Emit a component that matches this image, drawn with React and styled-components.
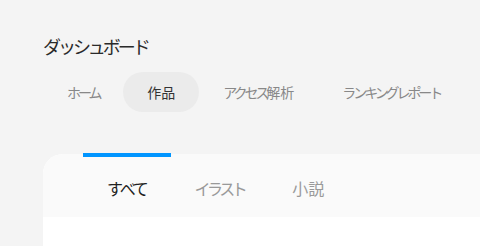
import React, { useState } from 'react'
import styled, { createGlobalStyle } from 'styled-components'

const GlobalStyle = createGlobalStyle`
    html, body {
        margin: 0;
        padding: 0;
        background: #f4f4f4;
        overflow: hidden;
    }
    body {
        font-family: "Noto Sans CJK JP", "Noto Sans", sans-serif;
    }
`

const navItems = ['ホーム', '作品', 'アクセス解析', 'ランキングレポート']
const tabItems = ['すべて', 'イラスト', '小説']

function Jp({ text }) {
    const parts = text.split(/([\u3040-\u309f]+|[\u30a0-\u30ff]+)/).filter(Boolean)
    return parts.map((part, i) => {
        if (/[\u3040-\u309f]/.test(part)) return <Kana key={i} $hira>{part}</Kana>
        if (/[\u30a0-\u30ff]/.test(part)) return <Kana key={i}>{part}</Kana>
        return <span key={i}>{part}</span>
    })
}

function App() {
    const [nav, setNav] = useState(1)
    const [tab, setTab] = useState(0)

    return (
        <>
            <GlobalStyle />
            <Page>
                <Title><Jp text="ダッシュボード" /></Title>
                <Nav>
                    {navItems.map((item, i) => (
                        <NavItem key={item} $active={i === nav} onClick={() => setNav(i)}>
                            <Jp text={item} />
                        </NavItem>
                    ))}
                </Nav>
                <Card>
                    <TabBar>
                        {tabItems.map((item, i) => (
                            <Tab key={item} $active={i === tab} onClick={() => setTab(i)}>
                                <Jp text={item} />
                            </Tab>
                        ))}
                    </TabBar>
                    <Content />
                </Card>
            </Page>
        </>
    )
}

const Kana = styled.span`
    letter-spacing: ${(p) => (p.$hira ? '-0.14em' : '-0.22em')};
`

const Page = styled.div`
    width: 560px;
    height: 246px;
    padding: 32px 0 0 43px;
    box-sizing: border-box;
`

const Title = styled.h1`
    margin: 0;
    font-size: 18px;
    line-height: 28px;
    font-weight: 400;
    color: #2a2a2a;

    ${Kana} { letter-spacing: -0.17em; }
`

const Nav = styled.nav`
    display: flex;
    margin: 12px 0 0 0;
`

const NavItem = styled.div`
    height: 40px;
    line-height: 40px;
    padding: 0 24px;
    border-radius: 20px;
    font-size: 14px;
    color: ${(p) => (p.$active ? '#333' : '#888')};
    background: ${(p) => (p.$active ? '#ebebeb' : 'transparent')};
    cursor: pointer;
`

const Card = styled.section`
    margin-top: 42px;
    border-radius: 20px 20px 0 0;
    background: #fff;
`

const TabBar = styled.div`
    display: flex;
    padding-left: 40px;
    background: #fafafa;
    border-radius: 20px 20px 0 0;
`

const Tab = styled.div`
    position: relative;
    padding: 22px 24px 17px;
    line-height: 24px;
    font-size: 16px;
    color: ${(p) => (p.$active ? '#222' : '#999')};
    cursor: pointer;

    &::before {
        content: '';
        display: ${(p) => (p.$active ? 'block' : 'none')};
        position: absolute;
        top: -1px;
        left: 0;
        right: 0;
        height: 4px;
        background: #0095ff;
    }
`

const Content = styled.div`
    height: 120px;
`

export default App
